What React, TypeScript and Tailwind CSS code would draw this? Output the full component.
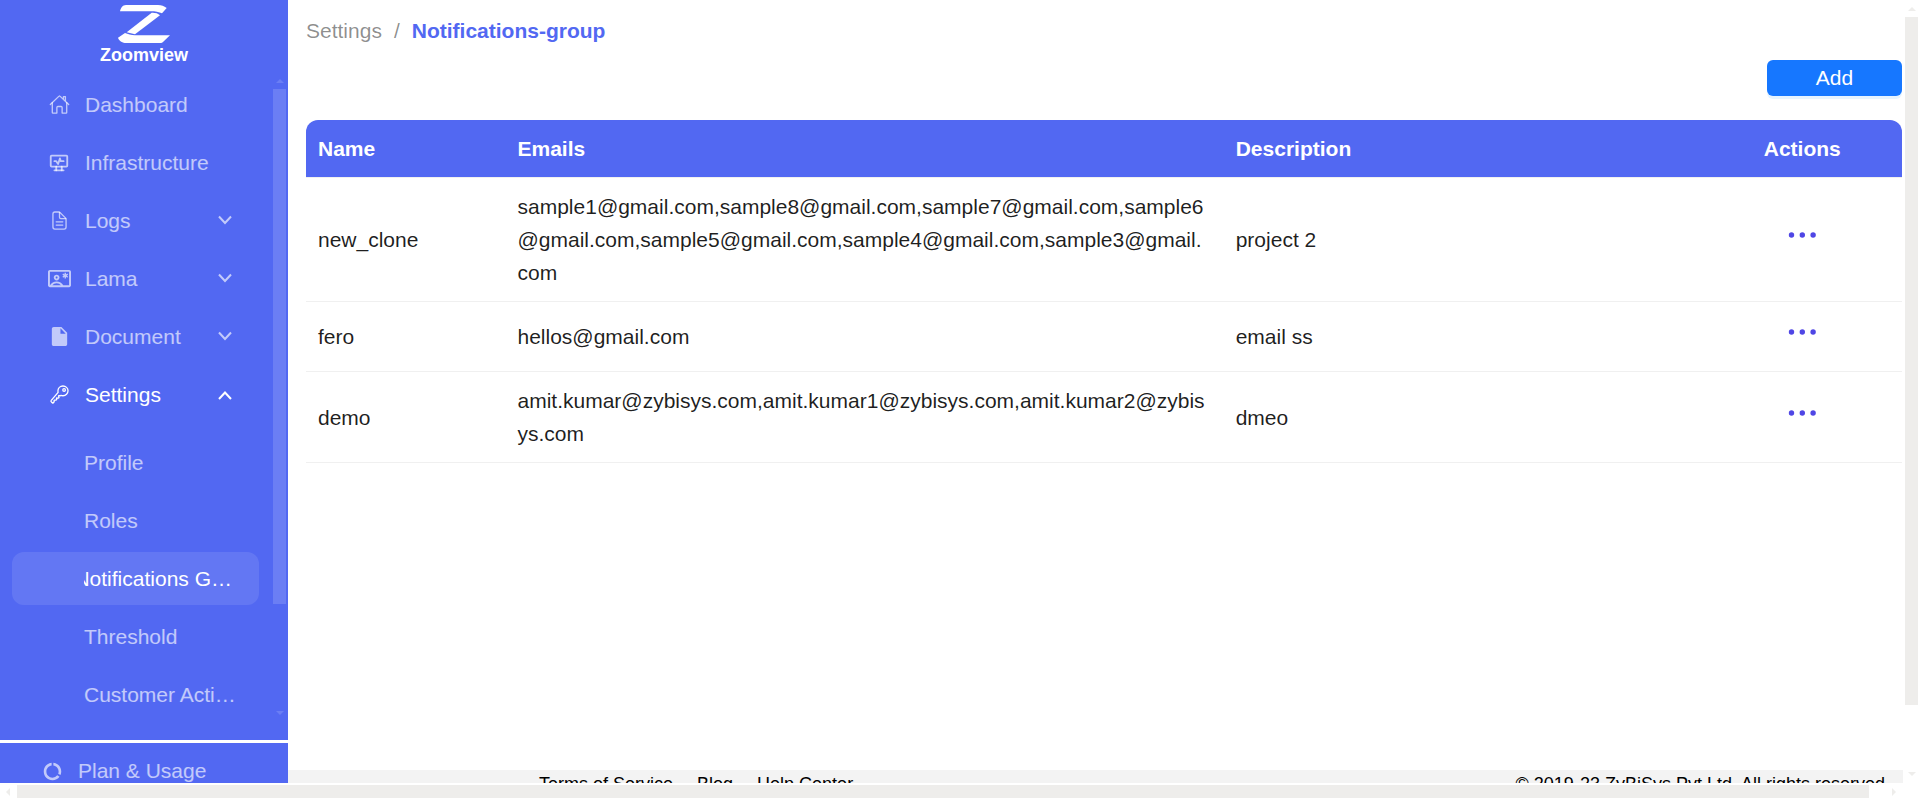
import type { ReactNode } from "react";
import { IoDocumentTextOutline, IoHomeOutline, IoKeyOutline } from "react-icons/io5";
import { MdDataUsage, MdInsertDriveFile, MdOutlineContactEmergency } from "react-icons/md";
import { TbHeartRateMonitor } from "react-icons/tb";

type Item = { label: string; icon: ReactNode; group?: boolean; open?: boolean };

const items: Item[] = [
  { label: "Dashboard", icon: <IoHomeOutline size={21} /> },
  { label: "Infrastructure", icon: <TbHeartRateMonitor size={22} /> },
  { label: "Logs", icon: <IoDocumentTextOutline size={21} />, group: true },
  { label: "Lama", icon: <MdOutlineContactEmergency size={23} />, group: true },
  { label: "Document", icon: <MdInsertDriveFile size={23} />, group: true },
  { label: "Settings", icon: <IoKeyOutline size={21} />, group: true, open: true },
];

const subItems = [
  { label: "Profile" },
  { label: "Roles" },
  { label: "Notifications G…", active: true },
  { label: "Threshold" },
  { label: "Customer Acti…" },
];

const groups = [
  {
    name: "new_clone",
    emails:
      "sample1@gmail.com,sample8@gmail.com,sample7@gmail.com,sample6@gmail.com,sample5@gmail.com,sample4@gmail.com,sample3@gmail.com",
    description: "project 2",
  },
  { name: "fero", emails: "hellos@gmail.com", description: "email ss" },
  {
    name: "demo",
    emails: "amit.kumar@zybisys.com,amit.kumar1@zybisys.com,amit.kumar2@zybisys.com",
    description: "dmeo",
  },
];

function Chevron({ up }: { up?: boolean }) {
  return (
    <svg width="14" height="12" viewBox="0 0 14 12" fill="none" stroke="currentColor" strokeWidth="2">
      <path d={up ? "M1 10l6-6.500 6 6.500" : "M1 1.500l6 6.500 6-6.500"} />
    </svg>
  );
}

function Arrow({ d, className }: { d: string; className: string }) {
  return (
    <svg width="8" height="8" viewBox="0 0 8 8" fill="currentColor" className={className} aria-hidden="true">
      <path d={d} />
    </svg>
  );
}

const UP = "M0 6 4 2l4 4z";
const DOWN = "M0 2h8L4 6z";
const LEFT = "M6 0v8L2 4z";
const RIGHT = "M2 0v8l4-4z";

function Sidebar() {
  return (
    <aside className="flex w-72 shrink-0 flex-col bg-[#5268f2] text-[21px] text-white/65">
      <div className="flex shrink-0 flex-col items-center pt-[5px] text-white">
        <svg width="52" height="38" viewBox="0 0 52 38" fill="currentColor" aria-hidden="true">
          <path d="M2 6.200C2.800 3 4.500 0 8 0H40C43.500 0 46 1.200 48.700 3L44 8.300C41 6.800 37 6.200 33 6.200z" />
          <path d="M33.700 7.700C37 7.500 40 8.300 42 10.200L17 29.300 8.700 27.300z" />
          <path d="M0 32.700 7 28C10 29.200 13 30.300 17 30.300H52L45.500 36.500C44.500 37.500 43.500 38 42 38H8C5 38 1 36 0 32.700z" />
        </svg>
        <span className="text-lg leading-6 font-bold">Zoomview</span>
      </div>
      <div className="flex min-h-0 flex-1 pt-[6px] pb-[19px]">
        <nav className="min-w-0 flex-1 overflow-hidden pt-[5px] pr-[14px] pl-3">
          <ul className="flex flex-col gap-[5px]">
            {items.map((it) => (
              <li key={it.label}>
                <button
                  className={
                    it.open
                      ? "flex h-[53px] w-full items-center pr-[27px] pl-[35px] text-white"
                      : "flex h-[53px] w-full items-center pr-[27px] pl-[35px]"
                  }
                >
                  <span className="flex w-6 justify-center">{it.icon}</span>
                  <span className="ml-[14px] flex-1 text-left">{it.label}</span>
                  {it.group && <Chevron up={it.open} />}
                </button>
              </li>
            ))}
          </ul>
          <ul className="mt-[15px] flex flex-col gap-[5px]">
            {subItems.map((it) => (
              <li key={it.label}>
                <a
                  href="#"
                  className={
                    it.active
                      ? "flex h-[53px] items-center rounded-xl bg-white/10 pr-[27px] pl-[72px] text-white"
                      : "flex h-[53px] items-center pl-[72px]"
                  }
                >
                  <span
                    className={
                      it.active ? "flex flex-1 justify-end overflow-hidden whitespace-nowrap" : "whitespace-nowrap"
                    }
                  >
                    {it.label}
                  </span>
                </a>
              </li>
            ))}
          </ul>
        </nav>
        <div className="flex w-[15px] flex-col items-center pr-[2px] text-white/15">
          <Arrow d={UP} className="my-1 shrink-0" />
          <div className="flex w-full flex-1 flex-col">
            <div className="h-[83%] bg-white/15" />
          </div>
          <Arrow d={DOWN} className="mb-1 shrink-0" />
        </div>
      </div>
      <div className="h-[43px] shrink-0 overflow-hidden border-t-[3px] border-white">
        <a href="#" className="flex h-14 items-center pl-[42px]">
          <MdDataUsage size={21} />
          <span className="ml-[15px]">Plan &amp; Usage</span>
        </a>
      </div>
    </aside>
  );
}

function GroupTable() {
  return (
    <table className="mt-6 w-full table-fixed border-separate border-spacing-0 text-[21px] leading-[33px] text-black/88">
      <thead>
        <tr className="text-left text-white">
          <th className="w-[12.5%] rounded-tl-xl border-b border-[#f0f0f0] bg-[#5268f2] bg-clip-padding p-3">Name</th>
          <th className="w-[45%] border-b border-[#f0f0f0] bg-[#5268f2] bg-clip-padding p-3">Emails</th>
          <th className="w-[30%] border-b border-[#f0f0f0] bg-[#5268f2] bg-clip-padding p-3">Description</th>
          <th className="w-[12.5%] rounded-tr-xl border-b border-[#f0f0f0] bg-[#5268f2] bg-clip-padding p-3 text-center">
            Actions
          </th>
        </tr>
      </thead>
      <tbody>
        {groups.map((g) => (
          <tr key={g.name}>
            <td className="border-b border-[#f0f0f0] p-3">{g.name}</td>
            <td className="border-b border-[#f0f0f0] p-3 break-all">{g.emails}</td>
            <td className="border-b border-[#f0f0f0] p-3">{g.description}</td>
            <td className="border-b border-[#f0f0f0] p-3">
              <button aria-label={`Actions for ${g.name}`} className="mx-auto mb-[9px] block text-[#4f46e5]">
                <svg width="36" height="36" viewBox="0 0 36 36" fill="currentColor">
                  <circle cx="7.500" cy="18" r="2.700" />
                  <circle cx="18.300" cy="18" r="2.700" />
                  <circle cx="29.100" cy="18" r="2.700" />
                </svg>
              </button>
            </td>
          </tr>
        ))}
      </tbody>
    </table>
  );
}

export default function App() {
  return (
    <div className="flex h-screen flex-col overflow-hidden bg-white font-['Liberation_Sans',Arial,sans-serif]">
      <div className="flex min-h-0 flex-1">
        <Sidebar />
        <div className="flex min-w-0 flex-1 flex-col">
          <main className="min-h-0 flex-1 overflow-hidden pt-[14px] pr-px pl-[18px]">
            <nav aria-label="Breadcrumb" className="flex gap-3 text-[21px] leading-[33px] text-black/45">
              <a href="#">Settings</a>
              <span>/</span>
              <span className="font-bold text-[#5268f2]">Notifications-group</span>
            </nav>
            <div className="mt-[13px] flex justify-end">
              <button className="h-9 w-[135px] rounded-md bg-[#1677ff] text-[21px] leading-9 text-white shadow-[0_3px_0_rgba(5,145,255,0.1)]">
                Add
              </button>
            </div>
            <GroupTable />
          </main>
          <footer className="flex h-[13px] shrink-0 justify-between overflow-hidden bg-[#f3f3f3] pr-[18px] pl-[251px] text-lg leading-7 whitespace-nowrap text-black">
            <div className="flex gap-6">
              <a href="#">Terms of Service</a>
              <a href="#">Blog</a>
              <a href="#">Help Center</a>
            </div>
            <span>© 2019-23 ZyBiSys Pvt Ltd. All rights reserved</span>
          </footer>
        </div>
        <div className="flex w-[17px] shrink-0 flex-col items-center text-[#eeedeb]">
          <Arrow d={UP} className="mt-[5px] mb-1 shrink-0" />
          <div className="flex w-full flex-1 flex-col px-[2px]">
            <div className="h-[92%] bg-[#eeedeb]" />
          </div>
          <Arrow d={DOWN} className="my-[5px] shrink-0" />
        </div>
      </div>
      <div className="flex h-[17px] shrink-0 items-center pr-[17px] text-[#eeedeb]">
        <Arrow d={LEFT} className="mr-[5px] ml-1 shrink-0" />
        <div className="mr-4 h-[13px] flex-1 bg-[#eeedeb]" />
        <Arrow d={RIGHT} className="mx-[5px] shrink-0" />
      </div>
    </div>
  );
}
